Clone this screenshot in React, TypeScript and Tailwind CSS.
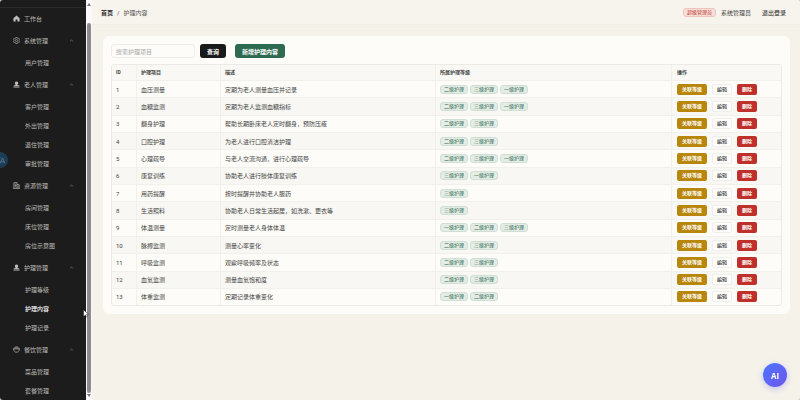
import clsx from "clsx";
import { ChevronUp } from "lucide-react";
import type { ReactNode } from "react";

type MenuGroup = {
	icon: ReactNode;
	title: string;
	children: string[];
};

type CareItem = {
	id: number;
	name: string;
	description: string;
	levels: string[];
};

const L1 = "一级护理";
const L2 = "二级护理";
const L3 = "三级护理";

const items: CareItem[] = [
	{ id: 1, name: "血压测量", description: "定期为老人测量血压并记录", levels: [L2, L3, L1] },
	{ id: 2, name: "血糖监测", description: "定期为老人监测血糖指标", levels: [L2, L3, L1] },
	{ id: 3, name: "翻身护理", description: "帮助长期卧床老人定时翻身，预防压疮", levels: [L2, L3] },
	{ id: 4, name: "口腔护理", description: "为老人进行口腔清洁护理", levels: [L2, L3] },
	{ id: 5, name: "心理疏导", description: "与老人交流沟通，进行心理疏导", levels: [L2, L3, L1] },
	{ id: 6, name: "康复训练", description: "协助老人进行肢体康复训练", levels: [L3, L1] },
	{ id: 7, name: "用药提醒", description: "按时提醒并协助老人服药", levels: [L3] },
	{ id: 8, name: "生活照料", description: "协助老人日常生活起居，如洗漱、更衣等", levels: [L3] },
	{ id: 9, name: "体温测量", description: "定时测量老人身体体温", levels: [L1, L2, L3] },
	{ id: 10, name: "脉搏监测", description: "测量心率变化", levels: [L2, L3] },
	{ id: 11, name: "呼吸监测", description: "观察呼吸频率及状态", levels: [L2, L3] },
	{ id: 12, name: "血氧监测", description: "测量血氧饱和度", levels: [L2, L3] },
	{ id: 13, name: "体重监测", description: "定期记录体重变化", levels: [L1, L2] },
];

function HomeIcon() {
	return (
		<svg viewBox="0 0 16 16" className="size-[7px]" fill="currentColor" aria-hidden="true">
			<path d="M8 1 15 7.5V15h-5v-5H6v5H1V7.5z" />
		</svg>
	);
}

function SettingIcon() {
	return (
		<svg viewBox="0 0 16 16" className="size-[7px]" fill="none" stroke="currentColor" strokeWidth="1.4" aria-hidden="true">
			<path d="M6.3 1h3.4l.6 2 1.6.9 2-.5 1.6 2.8L14 7.7v.6l1.5 1.5-1.6 2.8-2-.5-1.6.9-.6 2H6.3l-.6-2-1.6-.9-2 .5L.5 9.8 2 8.3v-.6L.5 6.2l1.6-2.8 2 .5L5.7 3z" />
			<circle cx="8" cy="8" r="2.6" />
		</svg>
	);
}

function PersonIcon() {
	return (
		<svg viewBox="0 0 16 16" className="size-[7px]" fill="currentColor" aria-hidden="true">
			<path d="M8 1a4 4 0 0 1 2.5 7v1.5H14l1 3H1l1-3h3.5V8A4 4 0 0 1 8 1zM1 13.8h14V15H1z" />
		</svg>
	);
}

function BuildingIcon() {
	return (
		<svg viewBox="0 0 16 16" className="size-[7px]" fill="none" stroke="currentColor" strokeWidth="1.6" aria-hidden="true">
			<path d="M2 14.5V1.5h7v13M9 6h5v8.5M0 14.5h16M4 5h3M4 8h3M4 11h3M11.5 9v3" />
		</svg>
	);
}

function BowlIcon() {
	return (
		<svg viewBox="0 0 16 16" className="size-[7px]" fill="none" stroke="currentColor" strokeWidth="1.6" aria-hidden="true">
			<path d="M0 6.5h16M1.5 6.5c0 4 1.5 6 4 7.5h5c2.5-1.5 4-3.500 4-7.500M2.500 6C3 3 5 2 8 2s5 1 5.500 4M5 4.500h6" />
		</svg>
	);
}

const groups: MenuGroup[] = [
	{ icon: <SettingIcon />, title: "系统管理", children: ["用户管理"] },
	{ icon: <PersonIcon />, title: "老人管理", children: ["客户管理", "外出管理", "退住管理", "审批管理"] },
	{ icon: <BuildingIcon />, title: "资源管理", children: ["房间管理", "床位管理", "房位示意图"] },
	{ icon: <PersonIcon />, title: "护理管理", children: ["护理等级", "护理内容", "护理记录"] },
	{ icon: <BowlIcon />, title: "餐饮管理", children: ["菜品管理", "套餐管理"] },
];

function Sidebar() {
	return (
		<aside className="relative flex w-[92px] shrink-0 overflow-hidden">
			<nav className="flex-1 bg-[#1c1c1c] text-[#bfbdb9]">
				<div className="h-2 border-b border-[#2b2b2b]" />
				<a href="#home" className="flex h-5 items-center gap-1 pl-[13px]">
					<HomeIcon />
					工作台
				</a>
				{groups.map((group) => (
					<div key={group.title}>
						<button type="button" className="flex h-[25px] w-full items-center gap-1 pr-3 pl-[13px]">
							{group.icon}
							<span className="flex-1 text-left">{group.title}</span>
							<ChevronUp className="size-[5px]" />
						</button>
						{group.children.map((child) => (
							<a
								key={child}
								href="#menu"
								className={clsx(
									"flex h-[19px] items-center pl-[25px]",
									child === "护理内容" && "font-medium text-white",
								)}
							>
								{child}
							</a>
						))}
					</div>
				))}
			</nav>
			{/* scrollbar */}
			<div className="flex w-[6px] flex-col items-center justify-between bg-[#fafafa] py-[3px]">
				<svg viewBox="0 0 4 3" className="h-[3px] w-1" fill="#777" aria-hidden="true">
					<path d="M0 3 2 0l2 3z" />
				</svg>
				<div className="mt-[17px] mb-px w-1 flex-1 rounded-full bg-[#8b8b8b]" />
				<svg viewBox="0 0 4 3" className="h-[3px] w-1" fill="#777" aria-hidden="true">
					<path d="M0 0l2 3 2-3z" />
				</svg>
			</div>
			{/* translate bubble */}
			<div className="absolute top-[152px] -left-2 flex size-4 items-center justify-end rounded-full bg-[#1d3d57] pr-[3px] text-[#5f7d94]">
				<svg viewBox="0 0 8 8" className="size-2" fill="none" stroke="currentColor" strokeWidth="0.8" aria-hidden="true">
					<path d="M3 7.5 5.5 2 8 7.5M4 5.8h3M0 1.5h3.5M2 1.5Q2 4 0 5" />
				</svg>
			</div>
			<svg viewBox="0 0 10 14" className="absolute top-[309px] left-[83px] h-[9px] w-[6px]" aria-hidden="true">
				<path d="M1 1v11l3-2.5 1.5 3.5 2-1L6 8.5h3.5z" fill="#fff" stroke="#222" strokeWidth="0.8" />
			</svg>
		</aside>
	);
}

function Header() {
	return (
		<header className="flex h-[25px] items-center justify-between border-b border-[#f0ede6] bg-[#f7f4ed] pr-[14px] pl-[9px]">
			<div className="flex items-center gap-1">
				<a href="#home" className="font-bold text-[#2b2b2b]">
					首页
				</a>
				<span>/</span>
				<span className="text-[#555]">护理内容</span>
			</div>
			<div className="flex items-center">
				<span className="mr-[5px] rounded-[3px] border border-[#eec5be] bg-[#f6dfd9] px-[3px] text-[5px] leading-[7px] text-[#c0392b]">
					超级管理员
				</span>
				<span className="mr-[11px]">系统管理员</span>
				<button type="button" className="font-medium">
					退出登录
				</button>
			</div>
		</header>
	);
}

function CareTable() {
	const cell = "border-r border-b border-[#f1f0eb] px-1 last:border-r-0 last:pl-[5px]";
	return (
		<div className="overflow-hidden rounded-[3px] border border-[#ebeae5]">
			<table className="h-[240px] w-full table-fixed border-separate border-spacing-0 text-left">
				<colgroup>
					<col className="w-[25px]" />
					<col className="w-[84px]" />
					<col className="w-[215px]" />
					<col />
					<col className="w-[109px]" />
				</colgroup>
				<thead className="bg-[#f9f8f4] text-[5px] text-[#444]">
					<tr className="h-4">
						{["ID", "护理项目", "描述", "所属护理等级", "操作"].map((title) => (
							<th key={title} className={clsx(cell, "font-bold")}>
								{title}
							</th>
						))}
					</tr>
				</thead>
				<tbody className="[&>tr:last-child>td]:border-b-0">
					{items.map((item) => (
						<tr key={item.id} className="even:bg-[#f8f7f3]">
							<td className={cell}>{item.id}</td>
							<td className={cell}>{item.name}</td>
							<td className={cell}>{item.description}</td>
							<td className={cell}>
								<div className="flex gap-[2px]">
									{item.levels.map((level) => (
										<span
											key={level}
											className="rounded-[3px] border border-[#cfdfd6] bg-[#e4ece6] px-[3px] text-[5px] leading-[7px] text-[#2d6a4f]"
										>
											{level}
										</span>
									))}
								</div>
							</td>
							<td className={cell}>
								<div className="flex gap-[5px] text-[5px] leading-[11px] font-bold">
									<button type="button" className="rounded-[2px] bg-[#b8860b] px-[5px] text-white">
										关联等级
									</button>
									<button
										type="button"
										className="rounded-[2px] border border-[#efeeea] bg-[#fefdfb] px-1 leading-[9px] font-medium text-[#333]"
									>
										编辑
									</button>
									<button type="button" className="rounded-[2px] bg-[#c0302b] px-[5px] text-white">
										删除
									</button>
								</div>
							</td>
						</tr>
					))}
				</tbody>
			</table>
		</div>
	);
}

export default function App() {
	return (
		<div className="bg-[#c9ccd2]">
			<div className="flex h-screen overflow-hidden rounded-[3px] bg-[#f5f2ea] font-[Roboto,'Noto_Sans_CJK_SC',sans-serif] text-[6px] leading-[9px] text-[#444]">
				<Sidebar />
				<div className="min-w-0 flex-1">
					<Header />
					<main className="pt-[11px] pr-[10px] pl-[11px]">
						<section className="rounded-md bg-[#fdfcf8] p-2">
							<form className="mb-[6px] flex items-center" onSubmit={(ev) => ev.preventDefault()}>
								<input
									type="text"
									aria-label="搜索护理项目"
									placeholder="搜索护理项目"
									className="mr-[5px] h-[14px] w-[84px] rounded-[3px] border border-[#eeede8] px-1 placeholder:text-[#a9a9a9]"
								/>
								<button type="submit" className="mr-[9px] h-[14px] rounded-[3px] bg-[#1a1a1a] px-[7px] font-bold text-white">
									查询
								</button>
								<button type="button" className="h-[14px] rounded-[3px] bg-[#2d6a4f] px-[7px] font-bold text-white">
									新增护理内容
								</button>
							</form>
							<CareTable />
						</section>
					</main>
				</div>
				<button
					type="button"
					className="fixed right-[13px] bottom-[13px] size-6 rounded-full bg-linear-to-br from-[#4775ff] to-[#6d54ea] font-['Open_Sans',sans-serif] text-[8px] font-bold text-white shadow-[0_2px_6px_#5b6cf055]"
				>
					AI
				</button>
			</div>
		</div>
	);
}
